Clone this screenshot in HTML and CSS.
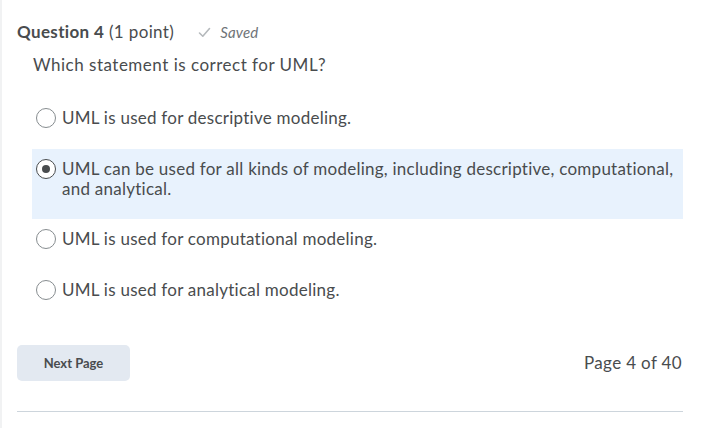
FILE: index.html
```html
<!DOCTYPE html>
<html>
<head>
<meta charset="utf-8">
<link rel="stylesheet" href="styles.css">
</head>
<body>
<div class="page">
  <div class="qhead">
    <span class="qtitle"><b>Question 4</b> (1 point)</span>
    <span class="saved">
      <svg class="check" width="13" height="11" viewBox="0 0 13 11"><path d="M1.5 6 L4.8 9.2 L11.5 1.5" fill="none" stroke="#b5b9bc" stroke-width="1.6" stroke-linecap="round" stroke-linejoin="round"/></svg>
      <i>Saved</i>
    </span>
  </div>
  <div class="qtext">Which statement is correct for UML?</div>
  <div class="options">
    <div class="opt"><span class="radio"></span><span class="label">UML is used for descriptive modeling.</span></div>
    <div class="opt selected"><span class="radio checked"></span><span class="label">UML can be used for all kinds of modeling, including descriptive, computational, and analytical.</span></div>
    <div class="opt"><span class="radio"></span><span class="label">UML is used for computational modeling.</span></div>
    <div class="opt"><span class="radio"></span><span class="label">UML is used for analytical modeling.</span></div>
  </div>
  <div class="footer">
    <button class="next">Next Page</button>
    <span class="pageinfo">Page 4 of 40</span>
  </div>
  <div class="rule"></div>
</div>
</body>
</html>
```
FILE: styles.css
```css
html, body {
  margin: 0;
  padding: 0;
  background: #ffffff;
}
body {
  font-family: Lato, "Open Sans", sans-serif;
  color: #494c4e;
  font-size: 17px;
  line-height: 20px;
  letter-spacing: 0.35px;
}
.page {
  border-left: 2px solid #f1f2f3;
  min-height: 428px;
  box-sizing: border-box;
  padding: 22px 36px 0 15px;
}
.qhead {
  display: flex;
  align-items: center;
  height: 20px;
}
.qtitle b {
  font-weight: 700;
}
.saved {
  display: flex;
  align-items: center;
  margin-left: 24px;
  font-size: 15px;
  letter-spacing: 0.2px;
  color: #6e7377;
}
.check {
  margin-right: 9px;
}
.qtext {
  margin-top: 13px;
  padding-left: 16px;
  letter-spacing: 0.5px;
}
.options {
  margin-top: 23px;
  letter-spacing: 0.25px;
}
.opt {
  display: flex;
  align-items: flex-start;
  padding: 10px 0 21px 19px;
}
.opt.selected {
  background: #e8f2fd;
  margin-left: 15px;
  padding-left: 4px;
  padding-bottom: 20px;
}
.radio {
  flex: none;
  width: 18px;
  height: 18px;
  border: 1px solid #868c8f;
  border-radius: 50%;
  box-sizing: content-box;
  margin-right: 6px;
  background: #fff;
  position: relative;
}
.radio.checked {
  border-color: #494c4e;
}
.radio.checked::after {
  content: "";
  position: absolute;
  left: 5px;
  top: 5px;
  width: 8px;
  height: 8px;
  border-radius: 50%;
  background: #494c4e;
}
.footer {
  display: flex;
  justify-content: space-between;
  align-items: center;
  margin-top: 24px;
}
.next {
  width: 113px;
  height: 36px;
  border: none;
  border-radius: 5px;
  background: #e3e9f1;
  color: #494c4e;
  font-family: Lato, sans-serif;
  font-weight: 700;
  font-size: 13px;
  letter-spacing: 0;
  padding: 0;
}
.pageinfo {
  margin-right: 1px;
}
.rule {
  margin-top: 30px;
  height: 1px;
  background: #cdd5dc;
}
```
